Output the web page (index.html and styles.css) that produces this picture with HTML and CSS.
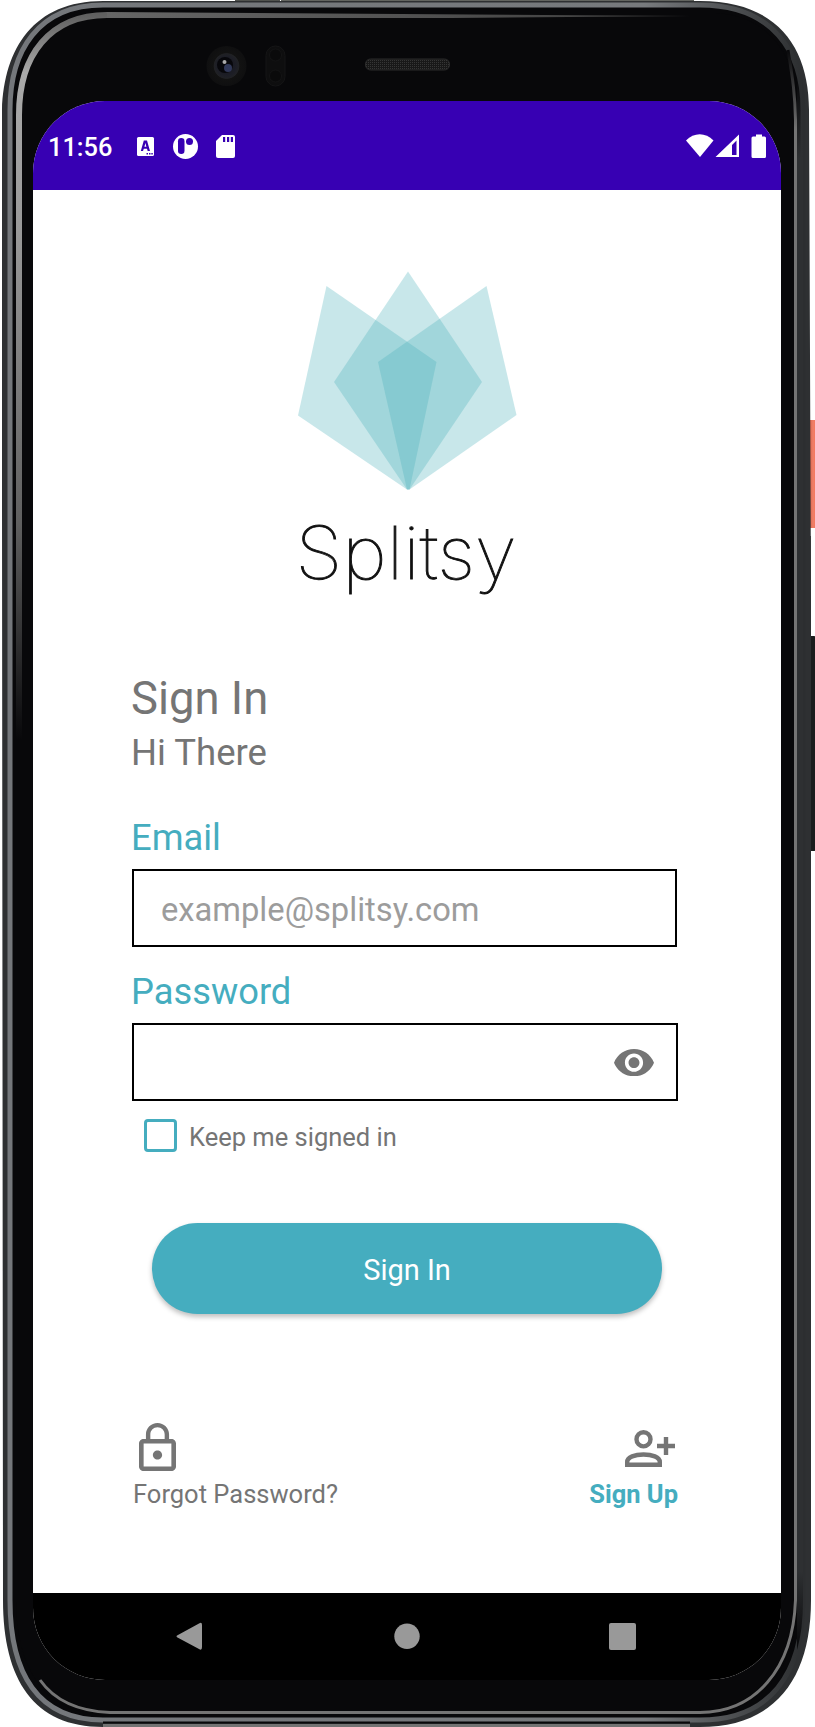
FILE: index.html
```
<!DOCTYPE html>
<html lang="en">
<head>
<meta charset="utf-8">
<title>Splitsy – Sign In</title>
<link rel="stylesheet" href="styles.css">
</head>
<body>
<div class="device">
  <svg class="frame" viewBox="0 0 815 1727" width="815" height="1727" aria-hidden="true">
    <defs>
      <linearGradient id="rim" x1="0" y1="0" x2="1" y2="0">
        <stop offset="0" stop-color="#74777b"/><stop offset=".8" stop-color="#777a7d"/><stop offset="1" stop-color="#2c2e30"/>
      </linearGradient>
      <linearGradient id="top" gradientUnits="userSpaceOnUse" x1="107" y1="0" x2="700" y2="0">
        <stop offset="0" stop-color="#666"/><stop offset=".5" stop-color="#525252"/><stop offset="1" stop-color="#3a3a3a"/>
      </linearGradient>
      <linearGradient id="side" gradientUnits="userSpaceOnUse" x1="0" y1="15" x2="0" y2="740">
        <stop offset="0" stop-color="#606060"/><stop offset=".08" stop-color="#aaa"/><stop offset=".3" stop-color="#999"/><stop offset=".7" stop-color="#606060"/><stop offset="1" stop-color="#08080a"/>
      </linearGradient>
      <linearGradient id="right" gradientUnits="userSpaceOnUse" x1="0" y1="50" x2="0" y2="130">
        <stop offset="0" stop-color="#08080a"/><stop offset="1" stop-color="#747474"/>
      </linearGradient>
      <linearGradient id="edge" gradientUnits="userSpaceOnUse" x1="0" y1="80" x2="0" y2="1650">
        <stop offset="0" stop-color="#2e3032" stop-opacity="0"/><stop offset=".05" stop-color="#2e3032"/><stop offset=".95" stop-color="#2e3032"/><stop offset="1" stop-color="#08080a"/>
      </linearGradient>
      <linearGradient id="coral" x1="0" y1="0" x2="1" y2="0">
        <stop offset="0" stop-color="#d2583f"/><stop offset=".5" stop-color="#ee7f68"/><stop offset="1" stop-color="#ff6f50"/>
      </linearGradient>
      <radialGradient id="lens">
        <stop offset="0" stop-color="#15161d"/><stop offset=".5" stop-color="#1d1e26"/><stop offset=".62" stop-color="#202124"/><stop offset=".66" stop-color="#121212"/><stop offset="1" stop-color="#0f0f10"/>
      </radialGradient>
      <pattern id="mesh" width="2" height="2" patternUnits="userSpaceOnUse">
        <rect width="2" height="2" fill="#181818"/><rect width="1" height="1" fill="#353535"/>
      </pattern>
    </defs>
    <rect x="235" y="0" width="45" height="3" fill="#50524e"/>
    <rect x="281" y="0" width="413" height="3" fill="#62645f"/>
    <rect x="808" y="420" width="10" height="108" rx="2" fill="url(#coral)"/>
    <rect x="809" y="536" width="2" height="65" fill="#555"/>
    <rect x="807" y="636" width="9" height="215" rx="2" fill="#1b1d1d"/>
    <path d="M103 1H700C778 1 809 48 809 110L811 600V1600C811 1680 774 1727 700 1727H103C34 1727 3 1680 3 1600L2 500V110C4 48 34 1 103 1Z" fill="#2e3032"/>
    <path d="M103 5H700C772 5 803 51 803 110V1600C803 1674 770 1720 700 1720H103C38 1720 10 1674 10 1600V110C10 51 38 5 103 5Z" fill="#08080a" stroke="url(#rim)" stroke-width="5"/>
    <path d="M103 13H715C768 15 797 55 797 110V1600C797 1670 760 1714 700 1714H103C46 1714 16 1670 16 1600V110C16 55 46 13 103 13Z" fill="#08080a"/>
    <path d="M107 12L690 16L450 18H107Z" fill="url(#top)"/>
    <path d="M19 740V115C19 55 50 15 107 15" fill="none" stroke="url(#side)" stroke-width="6"/>
    <path d="M797 80H803V1600Q803 1630 797 1650Z" fill="url(#edge)"/>
    <path d="M788 50C793 80 795 95 795.500 120V1600C793 1670 755 1712 700 1712.500H110C72 1711 52 1697 40 1680" fill="none" stroke="url(#right)" stroke-width="3"/>
    <path d="M103 1725.500H690" stroke="#737373" stroke-width="3"/>
    <path d="M103 1722.500H690" stroke="#08080a" stroke-width="2"/>
    <circle cx="226.500" cy="66" r="20" fill="url(#lens)"/>
    <circle cx="225" cy="65" r="8" fill="#07070b"/>
    <circle cx="228" cy="68" r="4" fill="#303858"/>
    <circle cx="224.500" cy="62" r="2" fill="#aaa"/>
    <rect x="266" y="46" width="19" height="40" rx="9.500" fill="#0e0e0f" stroke="#151516"/>
    <circle cx="275.500" cy="55" r="6" fill="#0a0a0b" stroke="#141415"/>
    <circle cx="275.500" cy="76" r="6" fill="#0a0a0b" stroke="#141415"/>
    <rect x="365.500" y="59" width="84" height="11" rx="5" fill="url(#mesh)" stroke="#2b2b2b"/>
  </svg>

  <div class="screen">
    <header class="status">
      <span class="clock">11:56</span>
      <svg class="notices" viewBox="0 0 100 28" width="100" height="28">
        <g fill="#fff">
          <rect x="1" y="4" width="17" height="19" rx="1.500"/>
          <circle cx="49.500" cy="13.500" r="12.500"/>
          <path d="M86 2H97a2 2 0 0 1 2 2V23a2 2 0 0 1-2 2H82a2 2 0 0 1-2-2V8Z"/>
        </g>
        <g fill="#3700b3">
          <path fill-rule="evenodd" d="M7.800 7.500H11L14 18H11.700L11 15.700H7.800L7 18H4.800ZM9.400 10L8.400 13.700H10.400Z"/>
          <path d="M10.500 20h1.500v1.500h-1.500zM13 20h1.500v1.500h-1.500zM15.300 20h1.500v1.500h-1.500z"/>
          <rect x="42" y="5" width="6.500" height="16" rx="3.200"/>
          <circle cx="53.500" cy="8.500" r="3.500"/>
          <path d="M87 4h2.200v5H87zM91 4h2.200v5H91zM94.800 4H97v5h-2.200z"/>
        </g>
      </svg>
      <svg class="signals" viewBox="0 0 82 28" width="82" height="28">
        <path fill="#fff" d="M0 7.500C8 -.8 19.500 -.8 27.500 7.500L14 24Z"/>
        <path fill="#fff" fill-rule="evenodd" d="M53 1.500V24H29.500ZM50.500 7.500L46 12V22H50.500Z"/>
        <path fill="#fff" d="M70 1.500H76V3.500H78.500A1.500 1.500 0 0 1 80 5V23.500A1.500 1.500 0 0 1 78.500 25H67A1.500 1.500 0 0 1 65.500 23.500V5A1.500 1.500 0 0 1 67 3.500H70Z"/>
      </svg>
    </header>

    <main class="content">
      <svg class="logo" viewBox="0 0 260 360" width="260" height="360" role="img" aria-label="Splitsy">
        <g fill="#48b0bb" fill-opacity=".3">
          <path d="M128 21.500L202 132L129.500 239.500H127L54 132Z"/>
          <path d="M46.500 36L156.500 112L129.500 239.500H127L18 165.500Z"/>
          <path d="M206.500 36L98 112L127 239.500H129.500L236.500 165Z"/>
        </g>
        <text class="wordmark" x="15.500" y="328.500" textLength="221" lengthAdjust="spacingAndGlyphs">Splitsy</text>
      </svg>

      <form class="form">
        <h1 class="title">Sign In</h1>
        <p class="greeting">Hi There</p>
        <label class="label" for="email">Email</label>
        <div class="field"><input id="email" class="input" type="text" placeholder="example@splitsy.com"></div>
        <label class="label label-password" for="password">Password</label>
        <div class="field field-password">
          <input id="password" class="input" type="password">
          <svg viewBox="1 4.500 22 15" width="40" height="27.300"><path fill="#757575" d="M12 4.500C7 4.500 2.730 7.610 1 12c1.730 4.390 6 7.500 11 7.500s9.270-3.110 11-7.500c-1.730-4.390-6-7.500-11-7.500zM12 17c-2.760 0-5-2.240-5-5s2.240-5 5-5 5 2.240 5 5-2.240 5-5 5zm0-8c-1.660 0-3 1.340-3 3s1.340 3 3 3 3-1.340 3-3-1.340-3-3-3z"/></svg>
        </div>
        <label class="keep"><span class="box"></span><span class="keep-text">Keep me signed in</span></label>
        <button class="submit" type="button">Sign In</button>
        <div class="links">
          <a class="link forgot">
            <svg viewBox="4 1 16 21" width="37" height="48" preserveAspectRatio="none"><path fill="#757575" d="M12 17c1.100 0 2-.9 2-2s-.9-2-2-2-2 .9-2 2 .9 2 2 2zm6-9h-1V6c0-2.760-2.240-5-5-5S7 3.240 7 6v2H6c-1.100 0-2 .9-2 2v10c0 1.100.9 2 2 2h12c1.100 0 2-.9 2-2V10c0-1.100-.9-2-2-2zM8.900 6c0-1.710 1.390-3.100 3.100-3.100s3.100 1.390 3.100 3.100v2H8.900V6zM18 20H6V10h12v10z"/></svg>
            <span>Forgot Password?</span>
          </a>
          <a class="link signup">
            <svg viewBox="0 0 51 37" width="51" height="37"><g fill="none" stroke="#757575" stroke-width="4.400"><ellipse cx="18.500" cy="9.300" rx="7" ry="7.100"/><path d="M2.200 34.800V32C2.200 27 10 24.500 18.500 24.500S34.800 27 34.800 32V34.800Z"/><path d="M32 16H50M41 7V25"/></g></svg>
            <span>Sign Up</span>
          </a>
        </div>
      </form>
    </main>

    <nav class="navbar">
      <svg viewBox="0 0 748 87" width="748" height="87" fill="#999">
        <path d="M166 30.500Q169 28.500 169 32V54Q169 58 166 56L144.500 44.500Q142.500 43.300 144.500 42.200Z"/>
        <circle cx="374" cy="43.300" r="12.700"/>
        <rect x="576" y="30" width="27" height="27" rx="2"/>
      </svg>
    </nav>
  </div>
</div>
</body>
</html>
```
FILE: styles.css
```
body {
  margin: 0;
  background: #fff;
  font-family: Roboto, sans-serif;
  color: #757575;
}
.device {
  position: relative;
  box-sizing: border-box;
  width: 815px;
  height: 1727px;
  padding: 101px 34px 47px 33px;
  overflow: hidden;
}
.frame {
  position: absolute;
  left: 0;
  top: 0;
}
.screen {
  position: relative;
  display: flex;
  flex-direction: column;
  width: 748px;
  height: 1579px;
  overflow: hidden;
  border-radius: 72px;
  background: #fff;
}
.status {
  display: flex;
  box-sizing: border-box;
  height: 89px;
  padding: 32px 13px 0 15px;
  background: #3700b3;
  color: #fff;
}
.clock {
  width: 88px;
  font-size: 25.400px;
  font-weight: 500;
  line-height: 28px;
  white-space: nowrap;
}
.signals { margin-left: auto; }
.content {
  flex: 1;
  display: flex;
  flex-direction: column;
  padding: 60px 103px 0 99px;
}
.logo { margin-left: 148px; flex: none; }
.wordmark {
  font-family: Inter, sans-serif;
  font-size: 73px;
  font-weight: 100;
  fill: #111;
  stroke: #111;
  stroke-width: .9px;
}
.form {
  display: flex;
  flex-direction: column;
  margin-top: 63px;
}
.title {
  margin: 0 0 0 -1px;
  font-size: 45.400px;
  font-weight: 400;
  line-height: 52px;
}
.greeting {
  margin: 6px 0 41px -1px;
  font-size: 36.500px;
  line-height: 44px;
}
.label {
  margin: 0 0 9px -1px;
  color: #45adbf;
  font-size: 36.300px;
  line-height: 44px;
}
.label-password { margin-top: 23px; }
.field {
  display: flex;
  align-items: center;
  box-sizing: border-box;
  height: 78px;
  margin-right: 1px;
  padding: 4px 20px 0 27px;
  border: 2px solid #000;
}
.field-password { margin-right: 0; padding-top: 1px; padding-right: 22px; }
.input {
  flex: 1;
  min-width: 0;
  padding: 0;
  border: 0;
  outline: 0;
  background: transparent;
  font: 32.700px Roboto, sans-serif;
}
.input::placeholder { color: #9c9c9c; opacity: 1; }
.keep {
  display: flex;
  align-items: flex-start;
  gap: 12px;
  margin: 18px 0 0 12px;
  font-size: 25.500px;
  line-height: 34px;
}
.keep-text { padding-top: 1px; }
.box {
  box-sizing: border-box;
  width: 33px;
  height: 33px;
  border: 3px solid #45adbf;
  border-radius: 4px;
}
.submit {
  height: 91px;
  margin: 69px 16px 0 20px;
  padding: 3px 0 0;
  border: 0;
  border-radius: 46px;
  background: #45adbf;
  box-shadow: 0 3px 5px rgba(0, 0, 0, .25);
  color: #fff;
  font: 29px Roboto, sans-serif;
}
.links {
  display: flex;
  justify-content: space-between;
  margin-top: 109px;
}
.link {
  display: flex;
  flex-direction: column;
  font-size: 25.500px;
  line-height: 30px;
}
.forgot { padding-left: 1px; gap: 8px; }
.forgot svg { margin-left: 6px; }
.signup {
  align-items: flex-end;
  gap: 12px;
  padding-top: 7px;
  color: #45adbf;
  font-weight: 700;
}
.signup svg { margin-right: 2px; }
.navbar { height: 87px; background: #000; }
.navbar svg { display: block; }
```
